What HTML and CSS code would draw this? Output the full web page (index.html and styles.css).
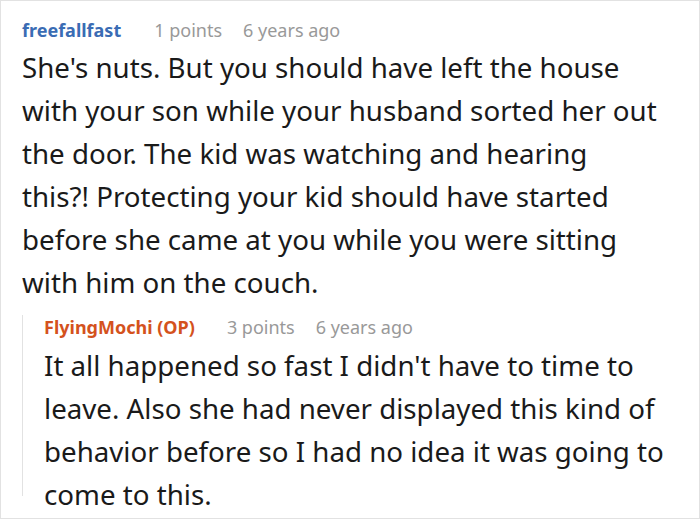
FILE: index.html
```html
<!DOCTYPE html>
<html>
<head>
<meta charset="utf-8">
<link rel="stylesheet" href="styles.css">
</head>
<body>
<div class="card">
  <div class="comment">
    <div class="meta">
      <span class="author">freefallfast</span>
      <span class="info">1 points</span>
      <span class="info">6 years ago</span>
    </div>
    <p class="text main">She's nuts. But you should have left the house with your son while your husband sorted her out the door. The kid was watching and hearing this?! Protecting your kid should have started before she came at you while you were sitting with him on the couch.</p>
    <div class="reply">
      <div class="meta">
        <span class="author op">FlyingMochi (OP)</span>
        <span class="info">3 points</span>
        <span class="info">6 years ago</span>
      </div>
      <p class="text last">It all happened so fast I didn't have to time to leave. Also she had never displayed this kind of behavior before so I had no idea it was going to come to this.</p>
    </div>
  </div>
</div>
</body>
</html>
```

FILE: styles.css
```css
html, body {
  margin: 0;
  padding: 0;
  background: #fff;
}
.card {
  width: 700px;
  height: 519px;
  box-sizing: border-box;
  border: 1px solid #e2e2e2;
  overflow: hidden;
  font-family: "Noto Sans", "Open Sans", sans-serif;
  color: #1a1a1a;
}
.comment {
  padding: 17px 18px 0 21px;
}
.meta {
  display: flex;
  font-size: 18px;
  line-height: 24px;
  height: 24px;
  white-space: nowrap;
}
.author {
  font-weight: bold;
  color: #3a6cb4;
  margin-right: 33px;
}
.author.op {
  color: #d4521d;
  margin-right: 32px;
}
.info {
  color: #999;
  margin-right: 21px;
}
.text {
  margin: 5px 0 0 0;
  font-size: 27.7px;
  line-height: 43px;
}
.text.main {
  margin-top: 4px;
  margin-right: 21px;
}
.reply {
  display: flex;
  flex-direction: column;
  margin-top: 11px;
  border-left: 1px solid #e2e2e2;
  padding-left: 21px;
}
.text.last {
  margin-bottom: -20px;
}
```
